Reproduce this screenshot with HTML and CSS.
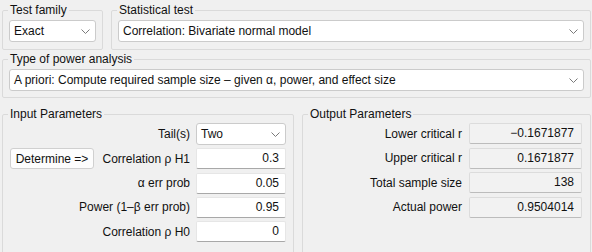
FILE: index.html
```html
<!DOCTYPE html>
<html>
<head>
<meta charset="utf-8">
<link rel="stylesheet" href="styles.css">
</head>
<body>
<div class="app">
  <div class="row-top">
    <fieldset class="group family">
      <legend>Test family</legend>
      <div class="combo"><span>Exact</span><svg class="chev" width="9" height="5" viewBox="0 0 9 5"><path d="M0.5 0.5 L4.5 4.5 L8.5 0.5" fill="none" stroke="#7a7a7a" stroke-width="1"/></svg></div>
    </fieldset>
    <fieldset class="group stat">
      <legend>Statistical test</legend>
      <div class="combo"><span>Correlation: Bivariate normal model</span><svg class="chev" width="9" height="5" viewBox="0 0 9 5"><path d="M0.5 0.5 L4.5 4.5 L8.5 0.5" fill="none" stroke="#7a7a7a" stroke-width="1"/></svg></div>
    </fieldset>
  </div>
  <fieldset class="group type">
    <legend>Type of power analysis</legend>
    <div class="combo"><span>A priori: Compute required sample size – given α, power, and effect size</span><svg class="chev" width="9" height="5" viewBox="0 0 9 5"><path d="M0.5 0.5 L4.5 4.5 L8.5 0.5" fill="none" stroke="#7a7a7a" stroke-width="1"/></svg></div>
  </fieldset>
  <div class="row-params">
    <fieldset class="group input">
      <legend>Input Parameters</legend>
      <div class="grid-in">
        <span class="label wide">Tail(s)</span>
        <div class="combo small"><span>Two</span><svg class="chev" width="9" height="5" viewBox="0 0 9 5"><path d="M0.5 0.5 L4.5 4.5 L8.5 0.5" fill="none" stroke="#7a7a7a" stroke-width="1"/></svg></div>

        <button class="btn">Determine =&gt;</button>
        <span class="label">Correlation ρ H1</span>
        <div class="field">0.3</div>

        <span class="label wide">α err prob</span>
        <div class="field">0.05</div>

        <span class="label wide">Power (1–β err prob)</span>
        <div class="field">0.95</div>

        <span class="label wide">Correlation ρ H0</span>
        <div class="field">0</div>
      </div>
    </fieldset>
    <fieldset class="group output">
      <legend>Output Parameters</legend>
      <div class="grid-out">
        <span class="label">Lower critical r</span>
        <div class="field out">−0.1671877</div>
        <span class="label">Upper critical r</span>
        <div class="field out">0.1671877</div>
        <span class="label">Total sample size</span>
        <div class="field out">138</div>
        <span class="label">Actual power</span>
        <div class="field out">0.9504014</div>
      </div>
    </fieldset>
  </div>
</div>
</body>
</html>
```

FILE: styles.css
```css
html, body {
  margin: 0;
  padding: 0;
  background: #f0f0f0;
}
body {
  font-family: "Liberation Sans", Arial, sans-serif;
  font-size: 12px;
  color: #111;
  overflow: hidden;
}
.app {
  padding: 3px 1px 0 2px;
  display: flex;
  flex-direction: column;
}
.group {
  margin: 0;
  border: 1px solid #dadada;
  border-radius: 2px;
  padding: 3px 6px 7px 6px;
  min-width: 0;
}
.group legend {
  padding: 0 2px;
  margin-left: -1px;
  line-height: 14px;
  font-size: 12px;
}
.row-top {
  display: grid;
  grid-template-columns: 101px minmax(0, 1fr);
  column-gap: 8px;
}
.type {
  margin-top: 2px;
  padding-bottom: 6px;
}
.row-params {
  margin-top: 9px;
  display: grid;
  grid-template-columns: 292px minmax(0, 1fr);
  column-gap: 8px;
}
.row-params .group {
  padding-top: 2px;
  height: 160px;
}
.input {
  padding-left: 7px;
  padding-right: 7px;
}
.input legend {
  margin-left: -2px;
}
.output {
  padding-right: 8px;
}
.output legend {
  margin-left: -1px;
}
.combo {
  box-sizing: border-box;
  height: 22px;
  background: #fff;
  border: 1px solid #cbcbcb;
  border-radius: 3px;
  display: flex;
  align-items: center;
  justify-content: space-between;
  padding: 0 5px 0 4px;
  white-space: nowrap;
  overflow: hidden;
}
.combo .chev {
  flex: none;
}
.grid-in {
  display: grid;
  grid-template-columns: 84px minmax(0, 1fr) 90px;
  grid-template-rows: 22px repeat(4, 21px);
  row-gap: 3.3px;
  column-gap: 6px;
  align-items: center;
}
.grid-in .wide {
  grid-column: 1 / 3;
}
.grid-out {
  display: grid;
  grid-template-columns: minmax(0, 1fr) 113px;
  grid-template-rows: repeat(4, 21px);
  row-gap: 3.5px;
  column-gap: 7px;
  align-items: center;
}
.label {
  text-align: right;
  white-space: nowrap;
}
.field {
  box-sizing: border-box;
  height: 21px;
  background: #fff;
  border: 1px solid #e6e6e6;
  border-bottom-color: #a8a8a8;
  border-radius: 2px;
  text-align: right;
  padding: 0 6px;
  line-height: 19px;
}
.field.out {
  background: #f2f2f2;
  border-color: #dcdcdc;
  border-bottom-color: #bcbcbc;
  padding-right: 7px;
}
.btn {
  box-sizing: border-box;
  height: 21px;
  width: 84px;
  margin: 0;
  padding: 0;
  font-family: inherit;
  font-size: 12px;
  color: #111;
  background: #fdfdfd;
  border: 1px solid #d0d0d0;
  border-radius: 3px;
}
```
